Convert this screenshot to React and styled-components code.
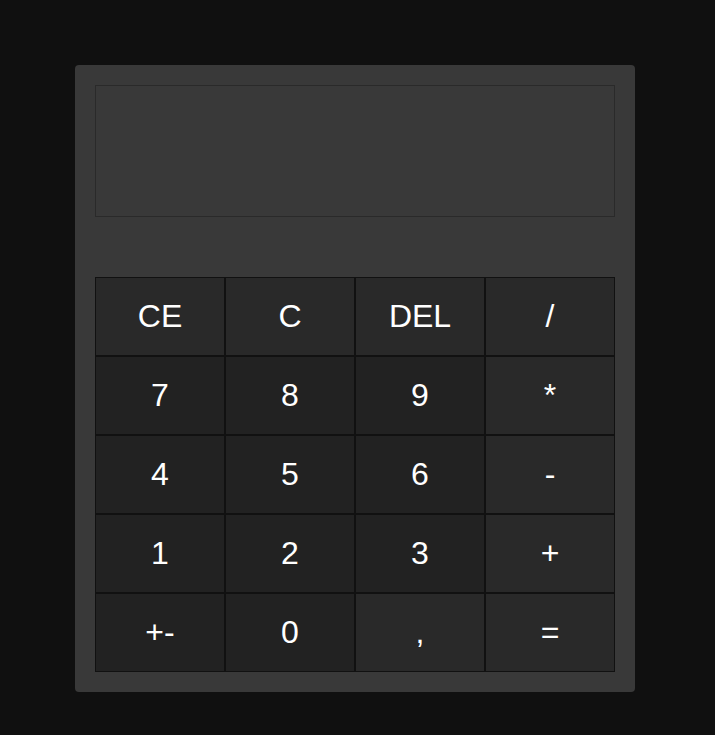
import React from 'react'
import styled, { createGlobalStyle } from 'styled-components'

const keys = [
  { label: 'CE', op: true },
  { label: 'C', op: true },
  { label: 'DEL', op: true },
  { label: '/', op: true },
  { label: '7' },
  { label: '8' },
  { label: '9' },
  { label: '*', op: true },
  { label: '4' },
  { label: '5' },
  { label: '6' },
  { label: '-', op: true },
  { label: '1' },
  { label: '2' },
  { label: '3' },
  { label: '+', op: true },
  { label: '+-' },
  { label: '0' },
  { label: ',', op: true },
  { label: '=', op: true },
]

const App = () => {
  return (
    <>
      <GlobalStyle />
      <Page>
        <Calculator>
          <Display />
          <Keypad>
            {keys.map((key) => (
              <Key key={key.label} $op={key.op}>
                {key.label}
              </Key>
            ))}
          </Keypad>
        </Calculator>
      </Page>
    </>
  )
}

const GlobalStyle = createGlobalStyle`
  * {
    box-sizing: border-box;
  }
  body {
    margin: 0;
    background: #101010;
    font-family: "Liberation Sans", Arial, sans-serif;
  }
`

const Page = styled.div`
  min-height: 735px;
  padding-top: 65px;
  padding-left: 75px;
`

const Calculator = styled.div`
  width: 560px;
  height: 627px;
  padding: 20px;
  background: #393939;
  border-radius: 4px;
  display: flex;
  flex-direction: column;
  gap: 60px;
`

const Display = styled.div`
  height: 132px;
  background: #393939;
  border: 1px solid #2a2a2a;
`

const Keypad = styled.div`
  display: grid;
  grid-template-columns: repeat(4, 130px);
  grid-auto-rows: 79px;
`

const Key = styled.div`
  display: flex;
  align-items: center;
  justify-content: center;
  background: ${props => props.$op ? '#292929' : '#222222'};
  border: 1px solid #111111;
  color: #ffffff;
  font-size: 32px;
  cursor: pointer;
`

export default App
